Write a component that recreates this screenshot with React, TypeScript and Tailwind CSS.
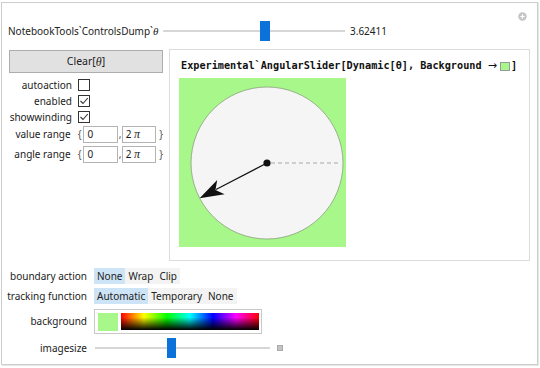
const Check = ({ on }: { on?: boolean }) => (
  <div className="w-[12px] h-[12px] border border-[#333] bg-white flex items-center justify-center">
    {on && (
      <svg width="10" height="10" viewBox="0 0 10 10">
        <path d="M1.5 5 L4 7.5 L8.8 2" fill="none" stroke="#333" strokeWidth="1.1" />
      </svg>
    )}
  </div>
);

const Range = ({ label }: { label: string }) => (
  <div className="flex items-center h-[17px]">
    <span className="w-[70px] text-right">{label}</span>
    <span className="ml-[7px] text-[#555]">{'{'}</span>
    <div className="ml-[2px] w-[35px] h-[17px] border border-[#b4b4b4] bg-white pl-[3px] leading-[15px]">0</div>
    <span className="ml-[1px] w-[3px] text-[#555]">,</span>
    <div className="w-[35px] h-[17px] border border-[#b4b4b4] bg-white pl-[3px] leading-[15px]">
      2 <span className="italic font-['Liberation_Serif',serif] text-[12px]">π</span>
    </div>
    <span className="ml-[3px] text-[#555]">{'}'}</span>
  </div>
);

const Opt = ({ text, on }: { text: string; on?: boolean }) => (
  <div className={`px-[3px] h-[16px] leading-[16px] ${on ? 'bg-[#cde3f6]' : 'bg-[#f3f3f3]'}`}>{text}</div>
);

const Dial = () => (
  <svg width="167" height="169" viewBox="0 0 167 169">
    <rect width="167" height="169" fill="#a7f78a" />
    <circle cx="88" cy="85" r="76" fill="#f5f5f5" stroke="#8aa07c" strokeWidth="0.8" />
    <line x1="92" y1="85" x2="162" y2="85" stroke="#a8a8a8" strokeWidth="1.2" strokeDasharray="4 3" />
    <line x1="88" y1="85" x2="37" y2="111.5" stroke="#111" strokeWidth="1.2" />
    <path d="M20.6 120.2 L38.2 102 L36.5 111.9 L45.6 116.2 Z" fill="#111" />
    <circle cx="88" cy="85" r="3.6" fill="#111" />
  </svg>
);

export default function App() {
  return (
    <div className="w-[540px] h-[368px] bg-white pl-[1px] pt-[2px] text-[10px] text-[#222] whitespace-nowrap font-['Noto_Sans',sans-serif]">
      <div className="relative w-[537px] h-[363px] border border-[#cdcdcd] shadow-[1px_1px_0_#e6e6e6]">
        <svg className="absolute right-[10px] top-[9px]" width="9" height="9" viewBox="0 0 9 9">
          <circle cx="4.5" cy="4.5" r="4.2" fill="#c4c4c4" />
          <path d="M4.5 2.3 V6.7 M2.3 4.5 H6.7" stroke="#fff" strokeWidth="1.2" />
        </svg>

        <div className="flex items-center h-[20px] mt-[18px] ml-[6px]">
          <span className="w-[155px]">
            NotebookTools`ControlsDump`<span className="italic font-['Liberation_Serif',serif] text-[11px]">θ</span>
          </span>
          <div className="relative w-[182px] h-[20px] flex items-center">
            <div className="w-full h-[2px] bg-[#d6d6d6]" />
            <div className="absolute left-[97px] top-0 w-[10px] h-[20px] bg-[#0a72d8]" />
          </div>
          <span className="ml-[5px]">3.62411</span>
        </div>

        <div className="flex mt-[8px]">
          <div className="ml-[7px] w-[154px] flex flex-col">
            <div className="mt-[1px] h-[23px] border border-[#adadad] bg-[#e1e1e1] flex items-center justify-center text-[10.5px]">
              Clear[<span className="italic font-['Liberation_Serif',serif] text-[12px]">θ</span>]
            </div>
            <div className="mt-[4px] flex flex-col">
              {[['autoaction', false], ['enabled', true], ['showwinding', true]].map(([l, on]) => (
                <div key={l as string} className="flex items-center h-[16px]">
                  <span className="w-[63px] text-right">{l as string}</span>
                  <div className="ml-[6px]">
                    <Check on={on as boolean} />
                  </div>
                </div>
              ))}
            </div>
            <div className="mt-[1px] flex flex-col gap-[3px] -ml-[7px]">
              <Range label="value range" />
              <Range label="angle range" />
            </div>
          </div>

          <div className="ml-[6px] w-[361px] h-[212px] border border-[#dcdcdc] bg-white pl-[10px] pt-[9px]">
            <div className="ml-[1px] h-[14px] flex items-center font-bold text-[10.2px] font-['DejaVu_Sans_Mono',monospace] text-[#111] whitespace-pre">
              <span>Experimental`AngularSlider[Dynamic[θ], Background </span>
              <span className="font-normal text-[11px] font-['DejaVu_Sans',sans-serif]">→</span>
              <span className="ml-[3px] w-[10px] h-[9px] bg-[#a7f78a] border border-[#999]" />
              <span className="ml-[1px]">]</span>
            </div>
            <div className="mt-[5px] -ml-[1px]">
              <Dial />
            </div>
          </div>
        </div>

        <div className="flex items-center mt-[7px]">
          <span className="w-[85px] text-right">boundary action</span>
          <div className="ml-[7px] flex">
            <Opt text="None" on />
            <Opt text="Wrap" />
            <Opt text="Clip" />
          </div>
        </div>

        <div className="flex items-center mt-[4px]">
          <span className="w-[85px] text-right">tracking function</span>
          <div className="ml-[7px] flex">
            <Opt text="Automatic" on />
            <Opt text="Temporary" />
            <Opt text="None" />
          </div>
        </div>

        <div className="flex items-center mt-[5px]">
          <span className="w-[85px] text-right">background</span>
          <div className="ml-[7px] w-[168px] h-[25px] border border-[#c8c8c8] bg-white flex items-center pl-[3px] gap-[3px]">
            <div className="w-[20px] h-[18px] bg-[#a7f78a]" />
            <div className="w-[138px] h-[17px] bg-[linear-gradient(to_bottom,transparent_25%,#000_100%),linear-gradient(to_right,#f00,#ff0,#0f0,#0ff,#00f,#f0f,#f00)]" />
          </div>
        </div>

        <div className="flex items-center mt-[4px] h-[20px]">
          <span className="w-[85px] text-right">imagesize</span>
          <div className="ml-[8px] relative w-[175px] h-[20px] flex items-center">
            <div className="w-full h-[2px] bg-[#d6d6d6]" />
            <div className="absolute left-[72px] top-0 w-[9px] h-[20px] bg-[#0a72d8]" />
          </div>
          <div className="ml-[7px] w-[6px] h-[6px] bg-[#c4c4c4] border border-[#aaa]" />
        </div>
      </div>
    </div>
  );
}
